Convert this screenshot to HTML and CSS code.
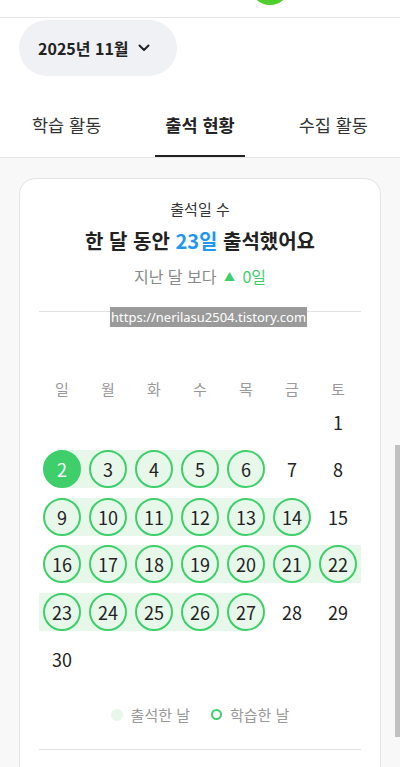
FILE: index.html
```html
<!DOCTYPE html>
<html lang="ko">
<head>
<meta charset="utf-8">
<link rel="stylesheet" href="styles.css">
</head>
<body>
<div class="topbar"><div class="logo"></div></div>
<div class="month-wrap">
  <button class="month">2025년 11월
    <svg class="chev" width="14" height="14" viewBox="0 0 14 14"><path d="M2.5 4.5 L7 9 L11.5 4.5" fill="none" stroke="#222" stroke-width="2" stroke-linecap="round" stroke-linejoin="round"/></svg>
  </button>
</div>
<nav class="tabs">
  <div class="tab"><span class="tab-label">학습 활동</span></div>
  <div class="tab active"><span class="tab-label">출석 현황</span></div>
  <div class="tab"><span class="tab-label">수집 활동</span></div>
</nav>
<main class="main">
  <section class="card">
    <div class="label">출석일 수</div>
    <div class="title">한 달 동안 <span class="blue">23일</span> 출석했어요</div>
    <div class="sub">지난 달 보다 <span class="up">▲</span> <span class="green">0일</span></div>
    <div class="divider"><span class="watermark">https://nerilasu2504.tistory.com</span></div>
    <div class="weekdays">
      <span>일</span><span>월</span><span>화</span><span>수</span><span>목</span><span>금</span><span>토</span>
    </div>
    <div class="cal">
      <div class="d sat">1</div>
      <div class="d s"><span class="c today">2</span></div>
      <div class="d m"><span class="c">3</span></div>
      <div class="d m"><span class="c">4</span></div>
      <div class="d m"><span class="c">5</span></div>
      <div class="d e"><span class="c">6</span></div>
      <div class="d">7</div>
      <div class="d">8</div>
      <div class="d s"><span class="c">9</span></div>
      <div class="d m"><span class="c">10</span></div>
      <div class="d m"><span class="c">11</span></div>
      <div class="d m"><span class="c">12</span></div>
      <div class="d m"><span class="c">13</span></div>
      <div class="d e"><span class="c">14</span></div>
      <div class="d">15</div>
      <div class="d s"><span class="c">16</span></div>
      <div class="d m"><span class="c">17</span></div>
      <div class="d m"><span class="c">18</span></div>
      <div class="d m"><span class="c">19</span></div>
      <div class="d m"><span class="c">20</span></div>
      <div class="d m"><span class="c">21</span></div>
      <div class="d m"><span class="c">22</span></div>
      <div class="d m"><span class="c">23</span></div>
      <div class="d m"><span class="c">24</span></div>
      <div class="d m"><span class="c">25</span></div>
      <div class="d m"><span class="c">26</span></div>
      <div class="d e"><span class="c">27</span></div>
      <div class="d">28</div>
      <div class="d">29</div>
      <div class="d">30</div>
    </div>
    <div class="legend">
      <span class="lg"><span class="dot"></span>출석한 날</span>
      <span class="lg"><span class="ring"></span>학습한 날</span>
    </div>
    <div class="divider bottom"></div>
  </section>
</main>
<div class="thumb"></div>
</body>
</html>
```
FILE: styles.css
```css
* { box-sizing: border-box; }
html, body { margin: 0; padding: 0; }
body {
  width: 400px;
  height: 767px;
  overflow: hidden;
  background: #f8f8f8;
  font-family: "Noto Sans CJK KR", "Noto Sans", sans-serif;
  color: #222;
  position: relative;
}
.topbar {
  height: 18px;
  background: #fff;
  border-bottom: 1px solid #e6e6e6;
  overflow: hidden;
  display: flex;
}
.logo {
  width: 40px;
  height: 40px;
  border-radius: 50%;
  background: #4fcf2c;
  margin: -35px 0 0 250px;
}
.month-wrap {
  background: #fff;
  padding: 2px 19px 0;
}
.month {
  display: flex;
  align-items: center;
  gap: 8px;
  height: 56px;
  width: 158px;
  padding: 0 0 0 19px;
  border: none;
  border-radius: 28px;
  background: #f0f1f4;
  font-family: inherit;
  font-size: 16px;
  font-weight: 700;
  color: #222;
}
.chev { flex: none; }
.tabs {
  display: flex;
  background: #fff;
  padding-top: 20px;
  border-bottom: 1px solid #e6e6e6;
}
.tab {
  flex: 1;
  display: flex;
  justify-content: center;
  height: 61px;
}
.tab-label {
  display: flex;
  align-items: center;
  padding: 0 10px 2px;
  font-size: 17.5px;
  color: #333;
  border-bottom: 2px solid transparent;
}
.tab.active .tab-label {
  font-weight: 700;
  color: #222;
  border-bottom-color: #222;
}
.main {
  padding: 20px 19px 0;
}
.card {
  background: #fff;
  border: 1px solid #e4e4e8;
  border-radius: 16px;
  padding: 20px 19px 60px;
  text-align: center;
}
.label {
  font-size: 15px;
  line-height: 20px;
  color: #333;
}
.title {
  margin-top: 8px;
  font-size: 20px;
  line-height: 28px;
  font-weight: 700;
  color: #222;
}
.blue { color: #2196f3; }
.sub {
  margin-top: 10px;
  font-size: 16px;
  line-height: 22px;
  color: #8a8a8a;
}
.up { color: #3ecf6a; font-size: 11px; vertical-align: 2px; margin: 0 3px; }
.green { color: #3ecf6a; }
.divider {
  margin-top: 24px;
  height: 1px;
  background: #e2e2e2;
  position: relative;
}
.watermark {
  position: absolute;
  left: 71px;
  top: -4px;
  height: 20px;
  padding: 0 1px;
  background: #9a9a9a;
  color: #fff;
  font-family: "Noto Sans", sans-serif;
  font-size: 13px;
  line-height: 20px;
  white-space: nowrap;
}
.weekdays {
  margin-top: 66px;
  display: grid;
  grid-template-columns: repeat(7, 46px);
  font-size: 15px;
  line-height: 22px;
  color: #999;
}
.cal {
  margin-top: 3px;
  display: grid;
  grid-template-columns: repeat(7, 46px);
  grid-auto-rows: 38px;
  row-gap: 9.4px;
}
.d {
  display: flex;
  align-items: center;
  justify-content: center;
  font-size: 18px;
  color: #222;
}
.sat { grid-column-start: 7; }
.d.m { background: #e7f8eb; }
.d.s { background: linear-gradient(90deg, transparent 50%, #e7f8eb 50%); }
.d.e { background: linear-gradient(90deg, #e7f8eb 50%, transparent 50%); }
.c {
  width: 38px;
  height: 38px;
  border-radius: 50%;
  border: 2px solid #3ecf6a;
  background: #e7f8eb;
  display: flex;
  align-items: center;
  justify-content: center;
}
.c.today {
  background: #3ecf6a;
  border-color: #3ecf6a;
  color: #fff;
}
.legend {
  margin-top: 27px;
  display: flex;
  justify-content: center;
  gap: 21px;
  font-size: 15px;
  line-height: 20px;
  color: #999;
}
.lg { display: flex; align-items: center; gap: 8px; }
.dot {
  width: 12px; height: 12px; border-radius: 50%;
  background: #e7f8eb;
}
.ring {
  width: 11px; height: 11px; border-radius: 50%;
  border: 2.5px solid #3ecf6a;
}
.divider.bottom { margin-top: 24px; }
.thumb {
  position: absolute;
  right: 0;
  top: 445px;
  width: 5px;
  height: 292px;
  background: #c1c1c1;
}
```
